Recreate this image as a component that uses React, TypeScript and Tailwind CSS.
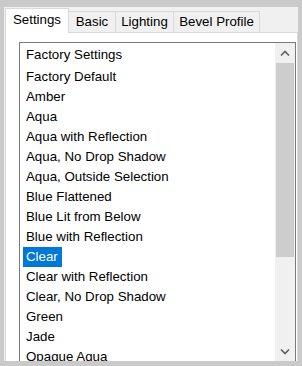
const tabs = [
  { label: 'Settings', width: 'w-[64px]', active: true },
  { label: 'Basic', width: 'w-[47px]', active: false },
  { label: 'Lighting', width: 'w-[58px]', active: false },
  { label: 'Bevel Profile', width: 'w-[86px]', active: false },
]

const presets = [
  'Factory Default',
  'Amber',
  'Aqua',
  'Aqua with Reflection',
  'Aqua, No Drop Shadow',
  'Aqua, Outside Selection',
  'Blue Flattened',
  'Blue Lit from Below',
  'Blue with Reflection',
  'Clear',
  'Clear with Reflection',
  'Clear, No Drop Shadow',
  'Green',
  'Jade',
  'Opaque Aqua',
]

function Chevron({ up }: { up: boolean }) {
  return (
    <svg width="10" height="6" viewBox="0 0 10 6" className="block">
      <path
        d={up ? 'M1 5.5 L5 1.5 L9 5.5' : 'M1 0.5 L5 4.5 L9 0.5'}
        fill="none"
        stroke="#606060"
        strokeWidth="1.6"
      />
    </svg>
  )
}

export default function App() {
  const selected = 'Clear'
  return (
    <div
      className="flex h-[366px] w-[302px] flex-col overflow-hidden bg-[#cacaca] pb-[5px] pl-[4px] pr-[4px] pt-[7px] text-[13.3px] text-black"
      style={{ fontFamily: '"Liberation Sans", Arial, sans-serif' }}
    >
      <div className="flex min-h-0 flex-1 flex-col overflow-hidden bg-[#f0f0f0] pl-[1px] pt-[1px]">
        {/* tab strip */}
        <div className="flex items-end">
          {tabs.map((tab) =>
            tab.active ? (
              <div
                key={tab.label}
                className={`relative z-10 -mb-px h-[25px] ${tab.width} border border-b-0 border-[#d9d9d9] bg-white pt-[1px] text-center leading-[20px]`}
              >
                {tab.label}
              </div>
            ) : (
              <div
                key={tab.label}
                className={`h-[21px] ${tab.width} border-r border-t border-[#d9d9d9] bg-[#f0f0f0] text-center leading-[20px]`}
              >
                {tab.label}
              </div>
            ),
          )}
        </div>

        {/* tab page, cut off at the bottom */}
        <div className="min-h-0 flex-1 overflow-hidden border border-b-0 border-[#d9d9d9] bg-white pl-[13px] pr-[1px] pt-[9px]">
          <div className="flex h-[321px] border border-[#7a7a7a] bg-white">
            <div className="min-w-0 flex-1 overflow-hidden">
              <div className="h-[24px] pl-[6px] pt-[2px] leading-[20px]">Factory Settings</div>
              {presets.map((name) => (
                <div key={name} className="h-[20px] pl-[3px]">
                  <span
                    className={`inline-block pl-[3px] pr-[4px] leading-[20px] ${
                      name === selected ? 'bg-[#0078d7] text-white' : ''
                    }`}
                  >
                    {name}
                  </span>
                </div>
              ))}
            </div>

            {/* scrollbar */}
            <div className="flex w-[20px] flex-col bg-[#f0f0f0]">
              <div className="flex h-[20px] items-center justify-center">
                <Chevron up />
              </div>
              <div className="ml-[1px] h-[194px] w-[18px] bg-[#cdcdcd]" />
              <div className="flex-1" />
              <div className="flex h-[20px] items-center justify-center">
                <Chevron up={false} />
              </div>
            </div>
          </div>
        </div>
      </div>
    </div>
  )
}
